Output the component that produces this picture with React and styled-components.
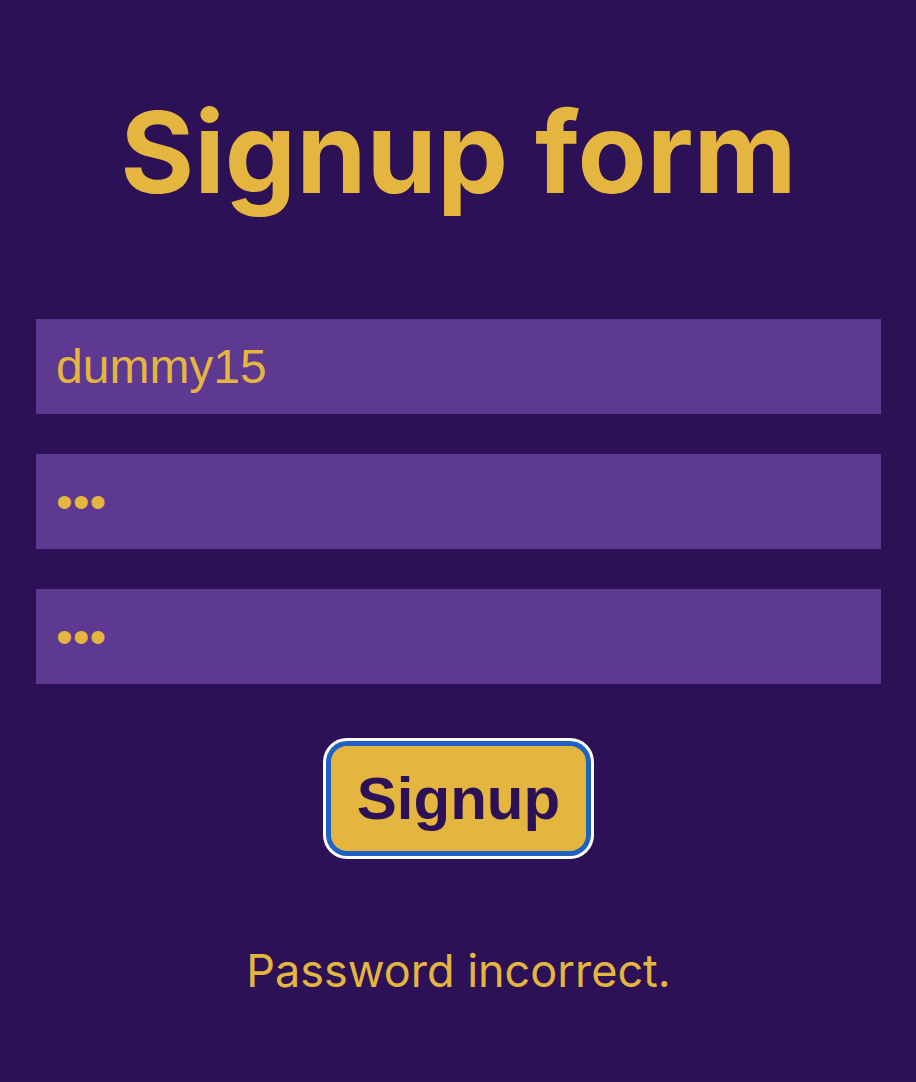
import React from "react";
import styled, { createGlobalStyle } from "styled-components";

const GlobalStyle = createGlobalStyle`
  *, *::before, *::after { box-sizing: border-box; }
  body { margin: 0; background: #2d1156; color: #e4b53f; font-family: Inter, sans-serif; }
`;

const Page = styled.main`
  min-height: 100vh;
  padding: 76px 35px 40px 36px;
  text-align: center;
`;

const Title = styled.h1`
  margin: 0 0 91px;
  font-size: 113px;
  line-height: 152px;
  font-weight: 700;
`;

const Form = styled.form`
  display: flex;
  flex-direction: column;
  align-items: center;
  gap: 40px;
`;

const Field = styled.input`
  display: block;
  width: 100%;
  height: 95px;
  padding: 0 20px;
  border: 0;
  border-radius: 0;
  outline: 0;
  background: #5d3992;
  color: #e4b53f;
  font-family: "Liberation Sans", Arial, sans-serif;
  font-size: 48px;
`;

const SubmitButton = styled.button`
  margin-top: 22px;
  height: 105px;
  padding: 0 26px;
  border: 0;
  border-radius: 16px;
  background: #e4b53f;
  color: #2d1156;
  font-family: "Liberation Sans", Arial, sans-serif;
  font-size: 60px;
  font-weight: 700;
  box-shadow: 0 0 0 5px #1f62c4, 0 0 0 8px #fff;
`;

const Message = styled.p`
  margin: 90px 0 0;
  font-size: 45px;
  line-height: 60px;
`;

export default function App() {
  return (
    <>
      <GlobalStyle />
      <Page>
        <Title>Signup form</Title>
        <Form onSubmit={(event) => event.preventDefault()}>
          <Field aria-label="Username" type="text" defaultValue="dummy15" />
          <Field aria-label="Password" type="password" defaultValue="abc" />
          <Field aria-label="Confirm password" type="password" defaultValue="abd" />
          <SubmitButton type="submit">Signup</SubmitButton>
        </Form>
        <Message role="alert">Password incorrect.</Message>
      </Page>
    </>
  );
}
